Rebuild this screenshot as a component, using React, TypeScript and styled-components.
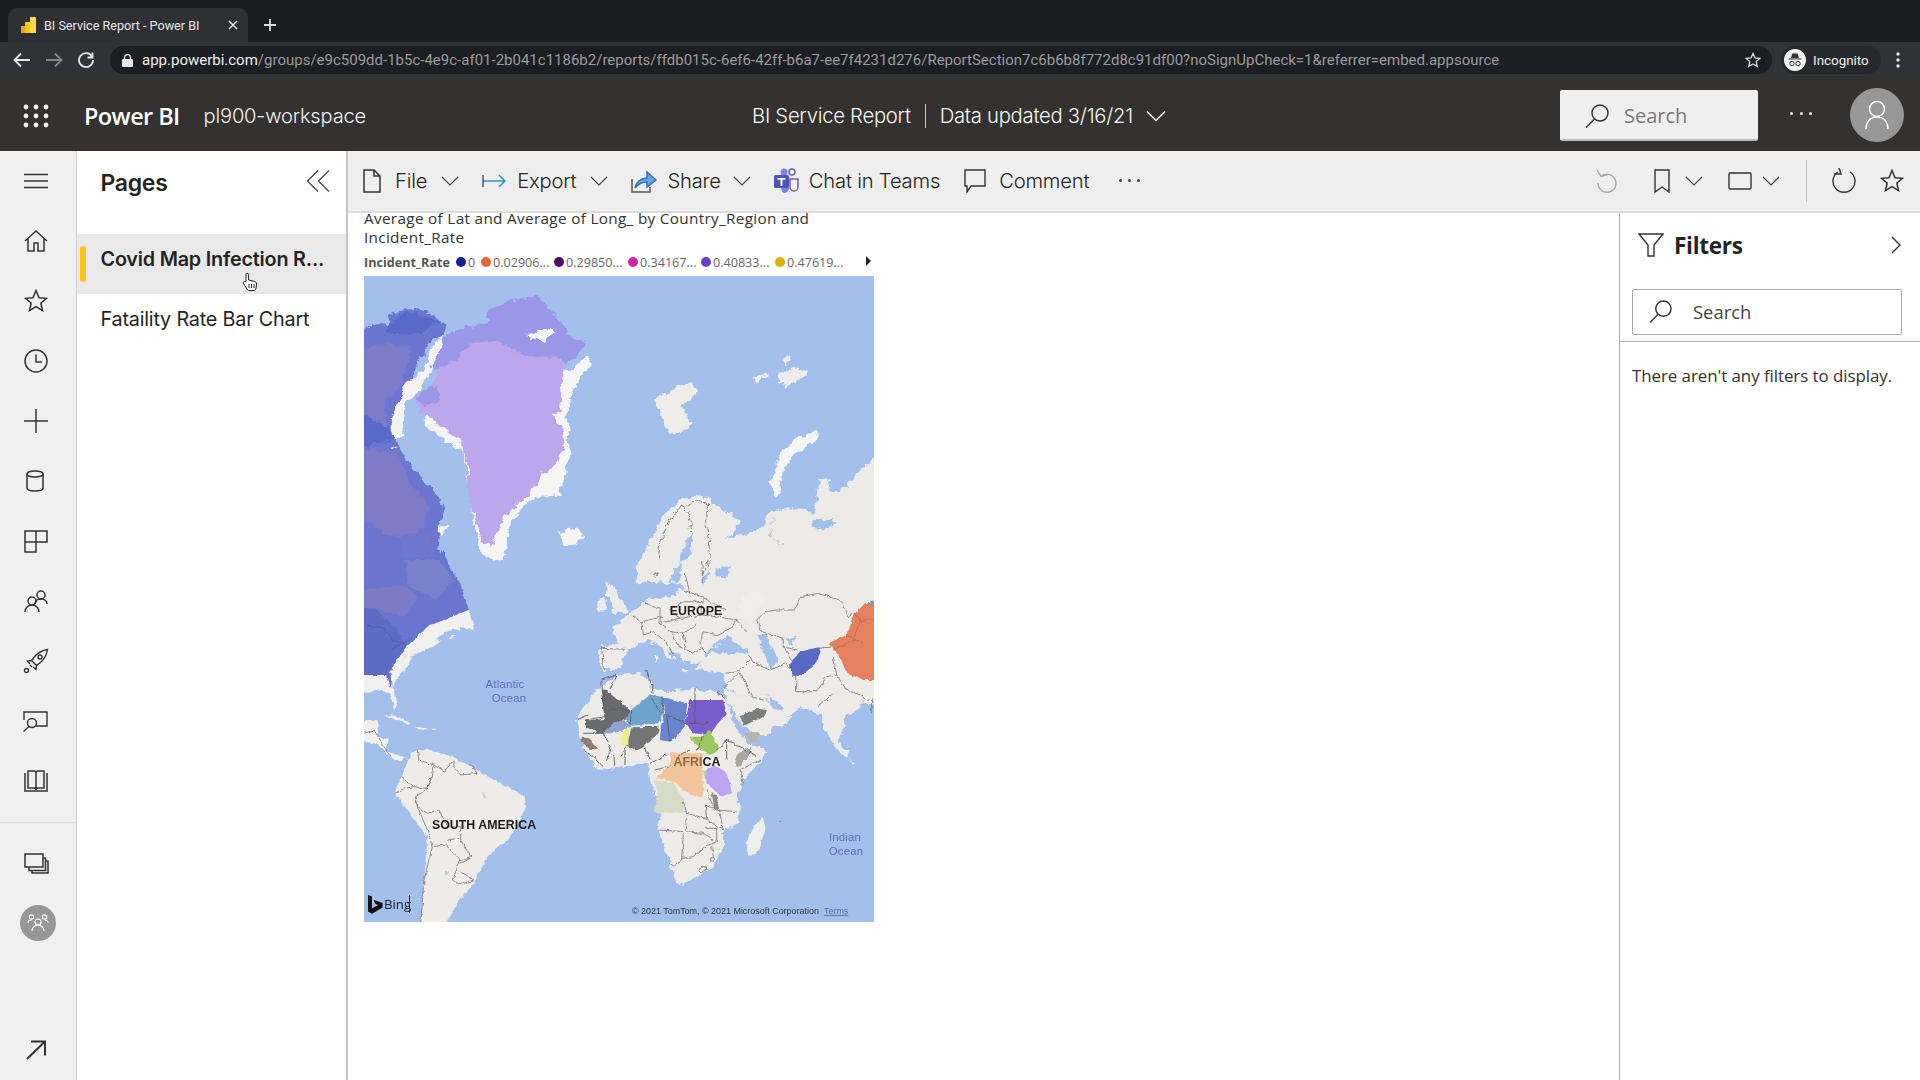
import React from "react";
import styled, { createGlobalStyle } from "styled-components";

const Global = createGlobalStyle`
  html, body { margin: 0; padding: 0; background: #fff; overflow: hidden; }
  #root { width: 1920px; height: 1080px; }
  * { box-sizing: border-box; }
`;

const Page = styled.div`
  width: 1920px; height: 1080px; display: flex; flex-direction: column; overflow: hidden;
  font-family: Inter, "Liberation Sans", sans-serif; color: #252423;
`;

/* ---------- browser chrome ---------- */
const TabStrip = styled.div`
  height: 42px; background: #1c1d20; padding: 8px 0 0 8px; display: flex; align-items: center; flex: none;
`;
const Tab = styled.div`
  width: 240px; height: 34px; background: #2f3033; border-radius: 9px 9px 0 0; display: flex; align-items: center; padding: 0 10px 0 13px;
  font: 12.6px Roboto, sans-serif; color: #e8e8e8;
`;
const TabTitle = styled.span` margin-left: 8px; flex: 1; white-space: nowrap; `;
const NewTab = styled.div` margin-left: 15px; display: flex; `;
const UrlBar = styled.div`
  height: 36px; background: #313235; display: flex; align-items: center; flex: none; padding: 0 12px 0 12px;
`;
const NavIcon = styled.svg` width: 20px; height: 20px; margin-right: 12px; flex: none; `;
const Omnibox = styled.div`
  margin-left: 2px; width: 1662px; height: 28px; border-radius: 14px; background: #1d1e21; display: flex; align-items: center; padding: 0 11px 0 12px;
  font: 15px Roboto, sans-serif; color: #9a9b9e; white-space: nowrap;
`;
const Host = styled.span` color: #f0f0f0; `;
const UrlText = styled.span` margin-left: 9px; flex: 1; `;
const IncognitoPill = styled.div`
  margin-left: 9px; width: 100px; height: 28px; border-radius: 14px; background: #27282b; display: flex; align-items: center; padding-left: 3px;
  font: 13.4px Roboto, sans-serif; color: #f0f0f0; gap: 7px; flex: none;
`;
const Kebab = styled.svg` margin-left: 14px; width: 6px; height: 18px; flex: none; `;

/* ---------- power bi header ---------- */
const AppHeader = styled.header`
  height: 73px; background: #333231; display: flex; align-items: center; flex: none; color: #fff; position: relative; padding-top: 2px;
`;
const AppLeft = styled.div` width: 752px; display: flex; align-items: center; padding-left: 23px; flex: none; `;
const Brand = styled.span` margin-left: 35px; font: 600 23.5px "Open Sans", sans-serif; letter-spacing: -.6px; `;
const Workspace = styled.span` margin-left: 24px; font: 300 20.1px Inter, sans-serif; letter-spacing: -.2px; color: #f0f0f0; `;
const ReportTitle = styled.span` font: 300 20.3px Inter, sans-serif; letter-spacing: -.28px; white-space: nowrap; color: #f6f6f6; `;
const TitleRule = styled.span` width: 1px; height: 24px; background: #c8c8c8; margin: 0 14px; flex: none; `;
const HeaderSearch = styled.div`
  margin-left: auto; width: 198px; height: 51px; background: #efefef; border-radius: 2px; border-bottom: 2px solid #bdbdbd; display: flex; align-items: center; padding: 2px 0 0 25px; gap: 14px;
  font: 20px "Open Sans", sans-serif; color: #777;
`;
const HeaderDots = styled.div` margin-left: 32px; width: 22px; display: flex; justify-content: space-between; padding-bottom: 4px; `;
const HeaderDot = styled.i` width: 3px; height: 3px; border-radius: 50%; background: #eee; `;
const Avatar = styled.div`
  margin: 0 16px 2px 38px; width: 54px; height: 54px; border-radius: 50%; background: #979797; display: flex; align-items: center; justify-content: center;
`;

/* ---------- body ---------- */
const Body = styled.div` flex: 1; display: flex; min-height: 0; `;
const Rail = styled.nav`
  width: 77px; background: #f0f0f0; border-right: 1px solid #d2d2d2; display: flex; flex-direction: column; flex: none;
`;
const RailItem = styled.div<{ $shift?: number }>`
  height: 60px; display: flex; align-items: center; justify-content: center; flex: none; padding-right: ${p => 5 - (p.$shift ?? 0)}px; color: #333;
`;
const RailRule = styled.div` height: 1px; background: #dcdcdc; margin-top: 11px; margin-bottom: 10px; flex: none; `;
const RailBottom = styled.div` margin-top: auto; `;
const RailAvatar = styled.div`
  width: 36px; height: 36px; border-radius: 50%; background: #979797; display: flex; align-items: center; justify-content: center;
`;

const PagesPane = styled.aside`
  width: 271px; background: #fff; border-right: 2px solid #c6c6c6; flex: none; display: flex; flex-direction: column;
`;
const PagesHead = styled.div` height: 83px; display: flex; align-items: flex-start; justify-content: space-between; padding: 18px 16px 0 23.500px; `;
const PagesTitle = styled.h2` margin: 0; font: 600 23px Inter, sans-serif; letter-spacing: -.3px; color: #252423; `;
const PageRow = styled.div<{ $active?: boolean }>`
  height: 60px; position: relative; display: flex; align-items: center; padding: 0 0 10px 23.500px; font: ${p => (p.$active ? 600 : 400)} 19.8px Inter, sans-serif; letter-spacing: -.2px; white-space: nowrap;
  background: ${p => (p.$active ? "#e9e9e9" : "#fff")}; color: #252423;
`;
const ActiveMark = styled.span` position: absolute; left: 3px; top: 12px; width: 6px; height: 36px; border-radius: 3px; background: #f2c811; `;
const HandCursor = styled.svg` position: absolute; left: 165px; top: 38px; width: 16px; height: 20px; `;

const Main = styled.main` flex: 1; display: flex; flex-direction: column; min-width: 0; `;
const Toolbar = styled.div`
  height: 62px; flex: none; background: #eeeeee; border-bottom: 2px solid #dcdcdc; display: flex; align-items: center; padding: 1px 16px 2px 15px;
  font: 300 20.2px Inter, sans-serif; color: #252423; letter-spacing: -.2px;
`;
const ToolItem = styled.div<{ $gap?: number; $after?: number }>`
  display: flex; align-items: center; gap: ${p => p.$gap ?? 14}px; margin-right: ${p => p.$after ?? 0}px; white-space: nowrap;
`;
const ToolChevron = styled.svg<{ $left?: number }>` width: 18px; height: 10px; margin-left: ${p => p.$left ?? 6}px; flex: none; `;
const ToolDivider = styled.span` width: 1px; height: 42px; background: #c8c8c8; margin: 0 24px 0 26px; `;
const ToolDots = styled.div` display: flex; gap: 6px; margin-left: 30px; `;
const ToolDot = styled.i` width: 3px; height: 3px; border-radius: 50%; background: #444; `;
const ToolRight = styled.div` margin-left: auto; display: flex; align-items: center; `;
const ToolGap = styled.span<{ $w: number }>` width: ${p => p.$w}px; flex: none; `;

const CanvasRow = styled.div` flex: 1; display: flex; min-height: 0; `;
const Canvas = styled.div` flex: 1; background: #fff; padding: 0 0 0 16px; min-width: 0; `;
const Visual = styled.div` width: 510px; `;
const VisualTitle = styled.div`
  width: 470px; font: 15.3px/19px "Open Sans", sans-serif; letter-spacing: .32px; color: #333; height: 41px; margin-top: -4px;
`;
const Legend = styled.div`
  display: flex; align-items: center; height: 22px; margin-top: 1px; font: 12.6px "Open Sans", sans-serif; color: #666; position: relative; white-space: nowrap;
`;
const LegendTitle = styled.span` font-weight: 700; color: #555; width: 92px; flex: none; `;
const LegendItem = styled.span<{ $w: number }>` display: flex; align-items: center; gap: 2px; width: ${p => p.$w}px; flex: none; `;
const LegendDot = styled.i<{ $c: string }>` width: 10px; height: 10px; border-radius: 50%; background: ${p => p.$c}; flex: none; `;
const LegendArrow = styled.i`
  position: absolute; right: 3px; top: 5px; width: 0; height: 0; border-left: 5px solid #222; border-top: 5px solid transparent; border-bottom: 5px solid transparent;
`;
const MapSvg = styled.svg` display: block; width: 510px; height: 646px; margin-top: 3px; `;

const FiltersPane = styled.aside` width: 301px; flex: none; background: #fff; border-left: 1px solid #a6a6a6; display: flex; flex-direction: column; `;
const FiltersHead = styled.div` height: 64px; padding: 0 19px 0 18px; display: flex; align-items: center; gap: 10px; `;
const FiltersTitle = styled.h3` margin: 0; flex: 1; font: 700 22.6px "Open Sans", sans-serif; letter-spacing: -.3px; color: #252423; `;
const FilterSearch = styled.div`
  margin: 12px 18px 0 12px; height: 46px; border: 1px solid #a8a8a8; border-radius: 2px; display: flex; align-items: center; padding: 0 0 2px 16px; gap: 20px;
  font: 18.4px "Open Sans", sans-serif; color: #444;
`;
const FilterRule = styled.div` height: 1px; background: #b8b8b8; margin-top: 6px; `;
const FilterEmpty = styled.p` margin: 0; padding: 22px 0 0 12px; font: 16.9px "Open Sans", sans-serif; letter-spacing: -.05px; color: #333; `;

/* ---------- icons ---------- */
const Line: React.FC<{ w: number; h: number; vb?: string; sw?: number; c?: string; children: React.ReactNode }> = ({ w, h, vb, sw = 1.5, c = "#333", children }) => (
  <svg width={w} height={h} viewBox={vb ?? `0 0 ${w} ${h}`} fill="none" stroke={c} strokeWidth={sw} style={{ flex: "none" }}>{children}</svg>
);
const Chevron = ({ left, c = "#444" }: { left?: number; c?: string }) => (
  <ToolChevron $left={left} viewBox="0 0 18 10" fill="none" stroke={c} strokeWidth="1.2"><path d="M1 1l8 8 8-8" /></ToolChevron>
);
const Magnifier = ({ size = 25, c = "#333" }: { size?: number; c?: string }) => (
  <Line w={size} h={size} vb="0 0 25 25" c={c} sw={1.5}><circle cx="15" cy="10" r="8" /><path d="M9.5 16L1 24.5" /></Line>
);

const LAND = "#ecebe7";
const WATER = "#a3bfec";
const BORDER = "#808084";
const B = (p: { d: string; c?: string; w?: number }) => (
  <path d={p.d} fill="none" stroke={p.c ?? BORDER} strokeWidth={p.w ?? 0.9} vectorEffect="non-scaling-stroke" strokeLinejoin="round" />
);

const MapDrawing = () => (
  <MapSvg viewBox="364 276 510 646" preserveAspectRatio="none">
    <defs>
      <filter id="rough" x="-3%" y="-3%" width="106%" height="106%" colorInterpolationFilters="sRGB">
        <feTurbulence type="fractalNoise" baseFrequency=".14" numOctaves="4" seed="4" result="n" />
        <feDisplacementMap in="SourceGraphic" in2="n" scale="9" xChannelSelector="R" yChannelSelector="G" />
        <feGaussianBlur stdDeviation=".4" />
      </filter>
      <filter id="fine" x="-3%" y="-3%" width="106%" height="106%" colorInterpolationFilters="sRGB">
        <feTurbulence type="fractalNoise" baseFrequency=".16" numOctaves="3" seed="9" result="n" />
        <feDisplacementMap in="SourceGraphic" in2="n" scale="4" xChannelSelector="R" yChannelSelector="G" />
        <feGaussianBlur stdDeviation=".4" />
      </filter>
      <clipPath id="mapclip"><rect x="364" y="276" width="510" height="646" /></clipPath>
    </defs>
    <rect x="364" y="276" width="510" height="646" fill={WATER} />
    <g clipPath="url(#mapclip)">
      <g filter="url(#rough)">
        {/* arctic and Eurasia top, zoom 6 coordinates */}
        <g transform="translate(350 200) scale(.3444 .3333)">
          {/* Canada */}
          <path fill="#6b76d0" d="M30 400L75 370 105 375 125 335 180 328 240 345 278 375 270 405 225 430 190 510 150 600 128 715 150 755 185 810 235 865 278 925 262 960 258 1040 310 1145H30Z" />
          <path fill="#7d7cc8" d="M30 450L110 430 180 440 150 560 100 600 110 680 30 640Z" />
          <path fill="#5a68c8" d="M30 640L110 680 125 720 30 740Z M105 375L170 335 260 365 210 400 120 400Z" />
          <path fill="#7f7bc4" d="M30 745L140 760 175 850 230 920 200 1000 120 1010 30 950Z" />
          <path fill="#6f78cd" d="M150 1010L235 1000 250 1080 280 1140H160Z" />
          {/* Baffin white coast */}
          <path fill="#f3f3f1" d="M270 405L280 420 240 510 205 565 165 600 150 650 155 715 130 715 115 680 130 630 150 600 160 545 200 530 225 480 245 430Z" />
          <path fill="#f3f3f1" d="M210 660L265 665 310 700 330 760 300 740 250 700 215 680Z" />
          <path fill="#f3f3f1" d="M262 980L285 975 270 1005 260 1010Z M110 738L135 745 128 748Z" />
          {/* Greenland */}
          <path fill="#f5f5f3" d="M640 510L690 465 700 490 650 570 625 650 640 760 610 880 525 900 470 955 445 1090 400 1080 375 1040 350 900 340 810 320 720 250 670 210 670 300 500Z" />
          <path fill="#bda6ec" d="M250 490L400 400 550 420 620 480 610 640 625 745 570 830 510 890 450 950 410 1040 385 1030 365 950 345 900 345 810 320 720 250 665 205 640 190 590 240 550 260 510Z" />
          <path fill="#9a96e8" d="M400 330L470 300 540 290 600 345 640 410 685 430 660 470 620 490 600 470 520 470 430 420 350 430 310 480 250 510 235 500 280 400 350 380 400 370Z" />
          <path fill="#9a96e8" d="M190 590L240 550 262 575 250 610 210 615Z" />
          <path fill="#f5f5f3" d="M515 405L585 385 590 400 565 430 545 410 520 415Z" />
          <path fill="#f5f5f3" d="M550 820L600 800 610 860 575 880 545 860Z M590 640L625 640 640 700 600 670Z" />
          {/* Iceland */}
          <path fill="#f5f5f2" d="M610 995L660 985 680 1010 640 1040 615 1035Z" />
          {/* Svalbard */}
          <path fill="#eeede9" d="M885 590L945 570 950 555 990 550 1015 570 985 600 965 615 990 680 930 705 910 660 885 610Z" />
          {/* Franz Josef */}
          <path fill="#eeede9" d="M1165 530L1215 520 1190 550Z M1245 520L1290 505 1330 510 1320 530 1270 560 1245 545Z M1262 470L1280 480 1260 495Z" />
          {/* Novaya Zemlya */}
          <path fill="#f5f5f3" d="M1220 850L1250 760 1300 710 1355 695 1355 720 1280 770 1250 830 1255 880 1235 885Z" />
          {/* Russia north */}
          <path fill={LAND} d="M835 1100L870 1020 910 950 960 900 1015 878 1050 905 1130 960 1120 990 1090 1020 1200 985 1220 935 1280 920 1350 945 1360 840 1385 830 1395 880 1440 860 1470 820 1540 760V1150H835Z" />
          <path fill={WATER} d="M960 1050L995 1000 990 1060 945 1110 925 1145H960Z M1340 960L1410 960 1380 990 1345 980Z M1040 1120L1070 1140 1010 1150Z" />
          <B d="M890 1130L905 1020 935 945 965 920 985 945 993 1000 M965 920L1015 905 1045 915 1030 950 1040 1010 1050 1060 1020 1130" c="#7a7a78" />
          <B d="M1230 950L1220 1010 1260 1040 M1340 1080L1420 1090 1470 1140" c="#c4c4c0" />
        </g>

        {/* Eurasia, zoom 9 coordinates */}
        <g transform="translate(570 560) scale(.3333)">
          <path fill={LAND} d="M920 -10V440L880 430 830 470 810 540 830 590 790 560 750 460 690 440 660 470 610 450 590 420 560 405 520 410 470 385 460 340 385 330 390 305 425 280 540 280 520 262 470 250 420 262 400 300 360 315 338 292 300 265 305 300 262 250 230 240 195 260 165 272 155 330 100 330 85 300 90 258 140 250 125 200 185 160 230 118 290 110 340 90 330 60 380 40 400 70 430 30 410 -10Z" />
          <path fill={LAND} d="M205 -5L220 55 250 30 280 60 265 -5Z M110 60L140 90 172 155 130 165 125 130 108 100Z M80 122L108 112 110 148 85 152Z" />
          <path fill={LAND} d="M460 385L520 410 560 405 590 425 610 445 665 475 600 510 590 530 520 500 490 450 470 420Z" />
          <path fill={LAND} d="M300 290L312 292 308 298Z M255 285L265 285 262 305 255 305Z M335 330L360 330 345 336Z" />
          <path fill={WATER} d="M565 225L590 218 600 260 625 300 610 330 590 320 580 270Z M420 258L470 228 510 262 470 250Z M645 232L678 236 664 250Z" />
          <path fill={WATER} d="M588 400L615 425 648 448 636 462 600 432Z M436 45L470 60 480 20 444 20Z" />
          <path fill="#f1f1ef" d="M495 165L515 105 575 90 590 120 555 150 545 195Z" opacity=".5" />
        </g>

        {/* Africa */}
        <path fill={LAND} d="M577 720L587 700 600 687 617 675 640 673 653 687 670 692 690 688 717 692 727 700 733 723 747 743 767 750 757 767 740 783 738 820 723 833 723 850 712 867 683 885 677 883 670 863 658 830 663 813 650 780 648 763 617 768 600 770 583 750 580 735Z" />
      </g>
      <g filter="url(#fine)">
        <g transform="translate(570 560) scale(.3333)">
          <B d="M185 165L215 185 220 225 250 215 280 240 310 280 M220 125L270 150 270 190 330 175 395 165 440 170 500 180 490 200 440 225 400 215 390 250 405 280 M270 190L300 215 340 220 380 195 M300 215L330 260 370 280 395 265 M340 220L345 265 M340 90L395 110 440 135 470 150 M395 165L400 110 M330 175L300 150 340 125 395 125 M360 100L345 40 M400 70L395 0 M215 185L280 170" />
          <B d="M560 180L585 155 620 150 675 150 690 110 745 100 810 120 835 170 850 160 M500 180L530 215 M560 180L575 215 640 235 640 260 680 270 M640 260L665 300 M745 265L790 260 810 290 M535 285L555 310 600 330 650 310 680 350 680 395 740 395 770 350 800 345 830 390 870 405 912 430 M470 340L510 330 540 300 M460 385L510 335 545 410 580 420 M745 440L790 400 M800 345L790 290 M905 415V460" />
          <B d="M95 260L100 325 M90 265L165 268" />
          <path fill="#686a6e" d="M92 392L110 392 180 450 180 475 130 490 105 520 80 520 70 505 45 505 45 480 100 478 105 470Z" />
          <path fill="#6fa5cb" d="M182 450L240 405 275 410 280 460 265 490 185 497 165 475Z" />
          <path fill="#6a84cd" d="M275 410L352 430 345 490 330 520 300 545 270 540 272 500 285 460Z" />
          <path fill="#7b5ecb" d="M360 420L460 420 470 460 440 495 420 525 370 520 345 490Z" />
          <path fill="#9cc85f" d="M358 530L395 530 420 510 440 550 445 572 420 582 390 570Z" />
          <path fill="#8ea3cf" d="M105 512L135 485 165 480 185 500 140 517 105 522Z" />
          <path fill="#747575" d="M185 502L265 500 265 515 240 545 200 572 170 555Z" />
          <path fill="#eeee85" d="M160 515L177 505 175 555 150 555Z" />
          <path fill="#8f7b72" d="M35 530L55 535 82 567 60 567 35 547Z" />
          <path fill="#7c7f80" d="M510 465L560 447 595 450 580 470 520 498Z" />
          <path fill="#b5b2a7" d="M522 520L570 515 560 545 540 545Z" />
          <path fill="#a9aaa5" d="M495 600L505 580 545 560 530 600Z" />
          <path fill="#5969c2" d="M660 310L690 275 745 262 752 275 735 315 692 347 665 347Z" />
          <path fill="#e5815f" d="M925 135V360H880L830 340 810 290 775 250 830 225 855 160 885 130Z" />
          <path fill="#8798ad" d="M890 128L925 115V145Z" />
          <B d="M100 440L105 470 45 480 M100 440L95 360 140 345 120 390 M180 450L110 450 M230 330L245 375 250 400 M375 385L375 420 M440 395L470 420 M275 460L240 410 M375 420V490 M345 490L420 490 M290 465L350 490 M100 520L120 560 110 600 M170 555L150 590 M225 560L240 600 M400 530L380 570 M440 570L470 540 510 560 560 590 M470 600L470 540 M55 465L20 480 M40 520H100 M180 497L185 450 M275 410L280 460 M300 545L290 465" c="#5c5c60" />
          <B d="M855 160L880 190 M790 270L850 240 870 180 912 180 M830 225L880 250" c="#b56a50" />
        </g>

        {/* Africa south, zoom 10 coordinates */}
        <g transform="translate(570 750) scale(.3333)">
          <path fill="#f3c39a" d="M300 10L400 10 395 70 405 120 390 145 340 120 310 95 260 85 250 90 282 60 300 40Z" />
          <path fill="#bca6f2" d="M405 60L430 45 470 65 487 130 450 137 410 100Z" />
          <path fill="#b6d68a" d="M395 60L408 58 408 78 400 78Z" />
          <path fill="#d6dcc6" d="M250 90L310 100 342 150 340 190 250 187 265 130Z" />
          <path fill="#8a8a88" d="M425 125L440 140 447 178 432 172Z" />
          <path fill="#a8a89f" d="M495 50L500 15 540 0 510 45Z" />
          <path fill="#eeeeea" d="M578 200L587 235 560 315 535 317 528 280 545 235Z M805 0L840 0 830 25Z M838 22L852 40 845 45Z" />
          <circle cx="632" cy="214" r="2.5" fill="#7f8faa" />
          <B d="M250 60L300 50 M510 60L520 100 M510 60L570 30 M340 155L350 190 410 205 405 165 440 180 500 185 M265 240L345 245 350 205 M340 250L335 330 310 348 300 340 M345 245L400 250 440 275 405 290 370 320 335 325 M410 205L440 230 460 240 450 190 M405 235L440 235 440 275 M425 290L430 320 M365 245L385 245 M410 120L430 170 450 185" />
          <ellipse cx="400" cy="358" rx="11" ry="8" fill="none" stroke={BORDER} strokeWidth="1" vectorEffect="non-scaling-stroke" />
          <circle cx="428" cy="328" r="6" fill="none" stroke={BORDER} strokeWidth="1" vectorEffect="non-scaling-stroke" />
          <B d="M40 0L70 20 100 55 M130 0L135 50 M165 0L165 45 M240 40L290 15 M320 20L360 0" c="#5c5c60" />
        </g>
      </g>
      <g filter="url(#fine)">
        {/* Americas, zoom 11 coordinates */}
        <g transform="translate(364 640) scale(.3333)">
          <path fill="#f1f0ec" d="M-20 105L75 100 88 150 102 195 93 207 75 160 50 150 -20 165Z" />
          <path fill="#5d6bc2" d="M-20 -5H140L105 45 75 95 82 145 70 100H-20Z" />
          <path fill="#f1f0ec" d="M75 100L130 45 215 -5 245 -5 215 15 140 50 135 75 100 110 88 140Z" />
          <path fill="#f1f0ec" d="M85 222L140 250 135 255 72 230Z M150 260L192 265 172 272Z M205 265L222 268 205 270Z M66 225L76 228 70 232Z" />
          <path fill="#f1f0ec" d="M-20 248L40 240 42 290 75 300 62 332 122 352 110 365 72 346 40 312 -20 302Z" />
          <path fill="#edece8" d="M160 330L200 330 265 350 345 395 400 425 482 470 486 500 440 590 370 650 350 690 330 730 295 770 240 860H170L185 660 190 590 150 540 115 490 95 460 110 410 140 345Z" />
          <path fill={WATER} d="M355 458L370 472 360 474Z M240 692L255 695 248 706Z" opacity=".8" />
          <B d="M160 330L165 360 210 375 205 410 185 450 155 470 160 500 190 520 225 510 250 560 290 560 290 600 320 650 290 670 M110 410L150 440 185 445 205 410 M95 460L125 445 150 440 M210 375L240 395 270 360 270 385 290 405 340 400 320 375 M155 470L165 510 190 570 205 620 180 720 170 850 M205 620L245 615 290 660 320 650 M250 600L285 595 M290 660L265 720 285 735 330 720 290 695 M0 280L30 270 60 320 80 350" />
        </g>
        {/* Canada lower, zoom 7 coordinates */}
        <g transform="translate(350 560) scale(.3444 .3333)">
          <path fill="#6a75cf" d="M30 -5H270L320 70 345 150 250 190 170 262 122 335 115 385 105 345H30Z" />
          <path fill="#7d7ac6" d="M30 90L160 75 200 110 155 170 70 145 30 145Z" />
          <path fill="#5f6cc6" d="M30 145L70 145 130 200 170 262 120 330 105 345 30 345Z" />
          <path fill="#7c80cc" d="M160 0H260L300 60 250 120 170 80Z" />
          <B d="M50 195L100 205 120 240 160 250 M120 270L170 240" c="#4d5ab0" />
          <path fill="#f1f0ec" d="M230 195L250 190 345 150 362 210 320 205 300 235 250 245 200 265 160 290 125 345 115 335 160 265Z" />
          <path fill={WATER} d="M250 235L300 205 320 215 265 250Z" />
        </g>
      </g>
    </g>
    <MapLabel x="696" y="615" $size={12.4}>EUROPE</MapLabel>
    <MapLabel x="697" y="766" $size={12.4}><tspan fill="#8d6b4e">AFRI</tspan>CA</MapLabel>
    <MapLabel x="484" y="829" $size={12.4}>SOUTH AMERICA</MapLabel>
    <OceanLabel x="505" y="688">Atlantic</OceanLabel>
    <OceanLabel x="509" y="702">Ocean</OceanLabel>
    <OceanLabel x="845" y="841">Indian</OceanLabel>
    <OceanLabel x="846" y="855">Ocean</OceanLabel>
    <path d="M368 895l4 1.400v12l6-3.400-2.800-1.300-1.600-4 9 3.200v4.500l-10.500 6.300-4.100-2.300z" fill="#111" />
    <BingText x="384" y="909">Bing</BingText>
    <rect x="409" y="895" width="1" height="18" fill="#222" />
    <CopyText x="632" y="914">© 2021 TomTom, © 2021 Microsoft Corporation</CopyText>
    <TermsText x="824" y="914">Terms</TermsText>
  </MapSvg>
);

const MapLabel = styled.text<{ $size: number }>`
  font: 700 ${p => p.$size}px "Liberation Sans", sans-serif; fill: #1c1c1c; text-anchor: middle;
`;
const OceanLabel = styled.text` font: 11.4px "Liberation Sans", sans-serif; fill: #5670b4; text-anchor: middle; letter-spacing: .2px; `;
const BingText = styled.text` font: 13.2px "Open Sans", sans-serif; fill: #222; `;
const CopyText = styled.text` font: 8.95px "Liberation Sans", sans-serif; fill: #333; `;
const TermsText = styled.text` font: 8.95px "Liberation Sans", sans-serif; fill: #5c6fa6; text-decoration: underline; `;

const URL_PATH = "/groups/e9c509dd-1b5c-4e9c-af01-2b041c1186b2/reports/ffdb015c-6ef6-42ff-b6a7-ee7f4231d276/ReportSection7c6b6b8f772d8c91df00?noSignUpCheck=1&referrer=embed.appsource";

const legend: [string, string, number][] = [
  ["#14218f", "0", 25],
  ["#e3683a", "0.02906...", 73],
  ["#4b0a6b", "0.29850...", 74],
  ["#d4269e", "0.34167...", 73],
  ["#6b3fc0", "0.40833...", 74],
  ["#d9b300", "0.47619...", 80],
];

export default function App() {
  return (
    <Page>
      <Global />
      <TabStrip>
        <Tab>
          <svg width="15" height="16" viewBox="0 0 15 16"><rect x="0" y="9" width="4" height="7" fill="#e8a80c" /><rect x="4" y="5" width="5" height="11" fill="#f2c811" /><path d="M9 0h5a1 1 0 0 1 1 1v15H9z" fill="#f7d84a" /></svg>
          <TabTitle>BI Service Report - Power BI</TabTitle>
          <Line w={10} h={10} c="#e8e8e8" sw={1.5}><path d="M1 1l8 8M9 1l-8 8" /></Line>
        </Tab>
        <NewTab><Line w={14} h={14} c="#dcdcdc" sw={1.8}><path d="M7 1v12M1 7h12" /></Line></NewTab>
      </TabStrip>
      <UrlBar>
        <NavIcon viewBox="0 0 20 20" fill="none" stroke="#e8e8e8" strokeWidth="1.8"><path d="M18 10H3M9 3.500L2.500 10 9 16.500" /></NavIcon>
        <NavIcon viewBox="0 0 20 20" fill="none" stroke="#85868a" strokeWidth="1.800"><path d="M2 10h15M11 3.500l6.500 6.500-6.500 6.500" /></NavIcon>
        <NavIcon viewBox="0 0 20 20" fill="none" stroke="#e8e8e8" strokeWidth="1.800"><path d="M16 6.500A7 7 0 1 0 17 10M16.500 2.500v5h-5" /></NavIcon>
        <Omnibox>
          <svg width="11" height="13" viewBox="0 0 11 13" fill="#e8e8e8"><rect y="5" width="11" height="8" rx="1" /><path d="M2.500 5V3.500a3 3 0 0 1 6 0V5" fill="none" stroke="#e8e8e8" strokeWidth="1.300" /></svg>
          <UrlText><Host>app.powerbi.com</Host>{URL_PATH}</UrlText>
          <Line w={16} h={16} c="#d8d8d8" sw={1.3}><path d="M8 1.500l2 4.500 4.800.4-3.600 3.200 1.100 4.800L8 12l-4.300 2.400 1.100-4.800L1.200 6.400 6 6z" /></Line>
        </Omnibox>
        <IncognitoPill>
          <svg width="22" height="22" viewBox="0 0 22 22"><circle cx="11" cy="11" r="11" fill="#f2f2f2" /><path d="M7 9l1.300-4.500h5.400L15 9zM4.500 9.500h13v1h-13z" fill="#333" /><circle cx="8" cy="14.500" r="2.200" fill="none" stroke="#333" /><circle cx="14" cy="14.500" r="2.200" fill="none" stroke="#333" /></svg>
          Incognito
        </IncognitoPill>
        <Kebab viewBox="0 0 6 18" fill="#e8e8e8"><circle cx="3" cy="3" r="1.700" /><circle cx="3" cy="9" r="1.700" /><circle cx="3" cy="15" r="1.700" /></Kebab>
      </UrlBar>
      <AppHeader>
        <AppLeft>
          <svg width="26" height="24" viewBox="0 0 26 24" fill="#f0f0f0">
            {[3, 13, 23].flatMap(x => [3, 12, 21].map(y => <circle key={`${x}-${y}`} cx={x} cy={y} r="2.400" />))}
          </svg>
          <Brand>Power BI</Brand>
          <Workspace>pl900-workspace</Workspace>
        </AppLeft>
        <ReportTitle>BI Service Report</ReportTitle>
        <TitleRule />
        <ReportTitle>Data updated 3/16/21</ReportTitle>
        <svg width="20" height="12" viewBox="0 0 20 12" fill="none" stroke="#f0f0f0" strokeWidth="1.500" style={{ marginLeft: 13 }}><path d="M1 1.500l9 9 9-9" /></svg>
        <HeaderSearch><Magnifier c="#333" />Search</HeaderSearch>
        <HeaderDots><HeaderDot /><HeaderDot /><HeaderDot /></HeaderDots>
        <Avatar>
          <Line w={24} h={30} c="#fff" sw={1.500}><circle cx="12" cy="9" r="7.500" /><path d="M1 29c0-7 4-12 11-12s11 5 11 12" /></Line>
        </Avatar>
      </AppHeader>
      <Body>
        <Rail>
          <RailItem><Line w={26} h={16} sw={1.4}><path d="M1 1.500h24M1 8h24M1 14.500h24" /></Line></RailItem>
          <RailItem><Line w={24} h={24}><path d="M1 12L12 2l11 10M4 10v12h6v-8h4v8h6V10" /></Line></RailItem>
          <RailItem><Line w={24} h={24}><path d="M12 1.500l3 7.200 7.500.6-5.700 4.900 1.800 7.500L12 17.600l-6.600 4.100 1.800-7.500L1.500 9.300 9 8.700z" /></Line></RailItem>
          <RailItem><Line w={24} h={24}><circle cx="12" cy="12" r="11" /><path d="M12 5.500V13h6" /></Line></RailItem>
          <RailItem><Line w={24} h={24}><path d="M12 0v24M0 12h24" /></Line></RailItem>
          <RailItem $shift={-1}><Line w={18} h={22}><ellipse cx="9" cy="4" rx="8" ry="3" /><path d="M1 4v14c0 2.500 3 3 8 3s8-.5 8-3V4" /></Line></RailItem>
          <RailItem><Line w={24} h={24}><path d="M1 2h22v11H12v10H1zM1 13h11M12 2v11" /></Line></RailItem>
          <RailItem><Line w={24} h={24}><circle cx="17" cy="6" r="4" /><path d="M11 15c0-3 2.500-5 6-5s6 2 6 5" /><circle cx="8" cy="12" r="4" /><path d="M1 23c0-4 3-7 7-7s7 3 7 7" /></Line></RailItem>
          <RailItem><Line w={26} h={26} sw={1.4}><path d="M24.500 1.500c-5 .8-9 2.800-12.500 6.500l-3.500 4.500 5 5 4.500-3.500c3.700-3.500 5.700-7.500 6.500-12.500zM8.500 12.500l-4 .5 2.500 3M13.500 17.500l-.5 4-3-2.500M7 17l2 2" /><circle cx="17" cy="9" r="2" /><circle cx="3.500" cy="22.500" r="2" /></Line></RailItem>
          <RailItem><Line w={25} h={21} sw={1.400}><path d="M1 9V1h23v14h-11" /><circle cx="9" cy="12" r="4.500" /><path d="M6 15.500L0.500 20.500" /></Line></RailItem>
          <RailItem><Line w={24} h={22} sw={1.500}><path d="M1 3v18h22V3M4 1h6c1.500 0 2 1 2 2 0-1 .5-2 2-2h6v17h-6c-1.500 0-2 1-2 2 0-1-.5-2-2-2H4zM12 3v17" /></Line></RailItem>
          <RailRule />
          <RailItem $shift={2}><Line w={25} h={21} sw={1.500}><rect x="1" y="1" width="18" height="13" /><path d="M5 14v3.500h16.500V5H19M8 17.500V20h16V8h-2.500" /></Line></RailItem>
          <RailItem $shift={6}>
            <RailAvatar><Line w={22} h={18} c="#fff" sw={1.200}><circle cx="4.500" cy="3" r="2.200" /><circle cx="17.500" cy="3" r="2.200" /><circle cx="11" cy="8" r="3" /><path d="M1 9c0-2 1.500-3 3.500-3M21 9c0-2-1.500-3-3.500-3M5 17c0-3 2.500-6 6-6s6 3 6 6" /></Line></RailAvatar>
          </RailItem>
          <RailBottom>
            <RailItem><Line w={20} h={20} sw={2}><path d="M1 19L19 1.500M5 1.500h14v14" /></Line></RailItem>
          </RailBottom>
        </Rail>
        <PagesPane>
          <PagesHead>
            <PagesTitle>Pages</PagesTitle>
            <Line w={24} h={24} vb="0 0 24 24" c="#444" sw={1.300}><path d="M12 1.500L1.500 12 12 22.500M23 1.500L12.500 12 23 22.500" /></Line>
          </PagesHead>
          <PageRow $active>
            <ActiveMark />
            Covid Map Infection R...
            <HandCursor viewBox="0 0 16 20"><path d="M4 9V2.500a1.300 1.300 0 0 1 2.600 0V8l6 1.500c1.300.3 2 1 2 2.500l-.6 4c-.2 1.300-1 2.500-2 2.500H7c-1 0-1.500-.6-2-1.500L1.500 11.500c-.8-1.300.8-2.500 2-1.500z" fill="#fff" stroke="#222" strokeWidth="1" /><path d="M7 12v4M9.500 12v4M12 12v4" stroke="#222" /></HandCursor>
          </PageRow>
          <PageRow>Fataility Rate Bar Chart</PageRow>
        </PagesPane>
        <Main>
          <Toolbar>
            <ToolItem $after={23}>
              <Line w={18} h={24}><path d="M1 1h10l6 6v16H1zM11 1v6h6" /></Line>File<Chevron left={0} />
            </ToolItem>
            <ToolItem $gap={11} $after={23}>
              <Line w={24} h={14} c="#2a9bbf" sw={1.500}><path d="M1 7h22M17 1l6 6-6 6" /><path d="M1 1v12" stroke="#555" /></Line>Export<Chevron left={3} />
            </ToolItem>
            <ToolItem $gap={10} $after={23}>
              <Line w={26} h={24} c="#3f7fd4" sw={1.500}><path d="M1 10v13h18v-5" stroke="#555" /><path d="M4 19c1-6 6-10 12-10V3l9 8-9 7v-5c-5 0-9 2-12 6z" fill="#6aa6e8" stroke="#2f72c4" /></Line>Share<Chevron left={2} />
            </ToolItem>
            <ToolItem $gap={10} $after={24}>
              <svg width="25" height="26" viewBox="0 0 25 26">
                <circle cx="18" cy="4" r="3" fill="none" stroke="#6264a7" strokeWidth="1.500" />
                <path d="M16 11h8v8a4 4 0 0 1-8 0z" fill="none" stroke="#6264a7" strokeWidth="1.500" />
                <circle cx="10" cy="4" r="3.500" fill="#7b83eb" />
                <rect x="0" y="7" width="15" height="13" rx="1.500" fill="#4b53bc" />
                <path d="M7 20h8v0a5 5 0 0 1-4 5c-2 0-4-2-4-5z" fill="#7b83eb" />
                <path d="M3.500 10h8v1.700H8.500V18H6.500v-6.300h-3z" fill="#fff" />
              </svg>
              Chat in Teams
            </ToolItem>
            <ToolItem $gap={13}>
              <Line w={22} h={24} sw={1.400}><path d="M1 1h20v16H7l-4 6v-6H1z" /></Line>Comment
            </ToolItem>
            <ToolDots><ToolDot /><ToolDot /><ToolDot /></ToolDots>
            <ToolRight>
              <Line w={24} h={26} c="#a8a8a8" sw={1.400}><path d="M6 8.500A9 9 0 1 1 3 15M2 2l4 6.500 7-2" /></Line>
              <ToolGap $w={35} />
              <Line w={16} h={24} sw={1.400}><path d="M1 1h14v22l-7-5-7 5z" /></Line>
              <Chevron left={15} />
              <ToolGap $w={25} />
              <Line w={24} h={18} sw={1.400}><rect x="1" y="1" width="22" height="16" rx="1" /></Line>
              <Chevron left={10} />
              <ToolDivider />
              <Line w={26} h={26} sw={1.400}><path d="M19 4a11 11 0 1 1-12 0M8 0l2 6-7 0" /></Line>
              <ToolGap $w={23} />
              <Line w={24} h={24}><path d="M12 1.500l3 7.200 7.500.6-5.700 4.900 1.800 7.500L12 17.600l-6.600 4.100 1.800-7.500L1.500 9.300 9 8.700z" /></Line>
            </ToolRight>
          </Toolbar>
          <CanvasRow>
            <Canvas>
              <Visual>
                <VisualTitle>Average of Lat and Average of Long_ by Country_Region and Incident_Rate</VisualTitle>
                <Legend>
                  <LegendTitle>Incident_Rate</LegendTitle>
                  {legend.map(([c, t, w]) => <LegendItem key={t} $w={w}><LegendDot $c={c} />{t}</LegendItem>)}
                  <LegendArrow />
                </Legend>
                <MapDrawing />
              </Visual>
            </Canvas>
            <FiltersPane>
              <FiltersHead>
                <Line w={26} h={24} sw={1.400}><path d="M1 1h24l-9 11v11h-6V12z" /></Line>
                <FiltersTitle>Filters</FiltersTitle>
                <Line w={10} h={18} sw={1.400}><path d="M1 1l8 8-8 8" /></Line>
              </FiltersHead>
              <FilterSearch><Magnifier size={24} />Search</FilterSearch>
              <FilterRule />
              <FilterEmpty>There aren't any filters to display.</FilterEmpty>
            </FiltersPane>
          </CanvasRow>
        </Main>
      </Body>
    </Page>
  );
}
